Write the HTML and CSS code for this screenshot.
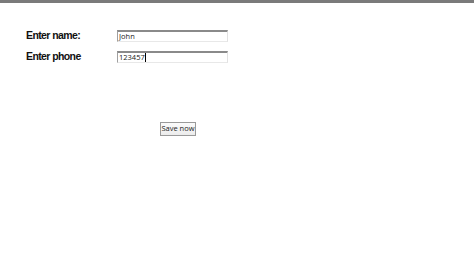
FILE: index.html
```html
<!DOCTYPE html>
<html>
<head>
<meta charset="utf-8">
<link rel="stylesheet" href="styles.css">
</head>
<body>
<div class="topbar"></div>
<div class="form">
  <div class="row">
    <label class="label">Enter name:</label>
    <div class="input"><span class="value">John</span></div>
  </div>
  <div class="row row2">
    <label class="label">Enter phone</label>
    <div class="input"><span class="value">123457</span><span class="caret"></span></div>
  </div>
  <div class="actions">
    <button class="btn">Save now</button>
  </div>
</div>
</body>
</html>
```

FILE: styles.css
```css
html, body {
  margin: 0;
  padding: 0;
  background: #ffffff;
}
.topbar {
  height: 3px;
  background: #7a7a7a;
}
.form {
  padding: 27px 0 0 26px;
  display: flex;
  flex-direction: column;
}
.row {
  display: flex;
  align-items: center;
  height: 12px;
}
.row2 {
  margin-top: 9px;
}
.label {
  width: 91px;
  padding-bottom: 2px;
  font-family: "Liberation Sans", Arial, sans-serif;
  font-weight: bold;
  font-size: 10.5px;
  letter-spacing: -0.6px;
  color: #111;
}
.input {
  box-sizing: border-box;
  width: 111px;
  height: 12px;
  border-top: 2px solid #8a8a8a;
  border-left: 1px solid #a0a0a0;
  border-right: 1px solid #e2e2e2;
  border-bottom: 1px solid #e8e8e8;
  display: flex;
  align-items: center;
  padding-left: 1px;
  font-family: "Open Sans", "DejaVu Sans", sans-serif;
  font-size: 7.5px;
  color: #222;
  line-height: 1;
}
.caret {
  display: inline-block;
  width: 1px;
  height: 9px;
  background: #000;
}
.actions {
  padding: 59px 0 0 134px;
  display: flex;
}
.btn {
  box-sizing: border-box;
  width: 36px;
  height: 14px;
  padding: 0;
  border: 1px solid #9a9a9a;
  background: linear-gradient(#fbfbfb, #ececec);
  font-family: "Open Sans", "DejaVu Sans", sans-serif;
  font-size: 7.5px;
  color: #222;
  line-height: 1;
}
```
